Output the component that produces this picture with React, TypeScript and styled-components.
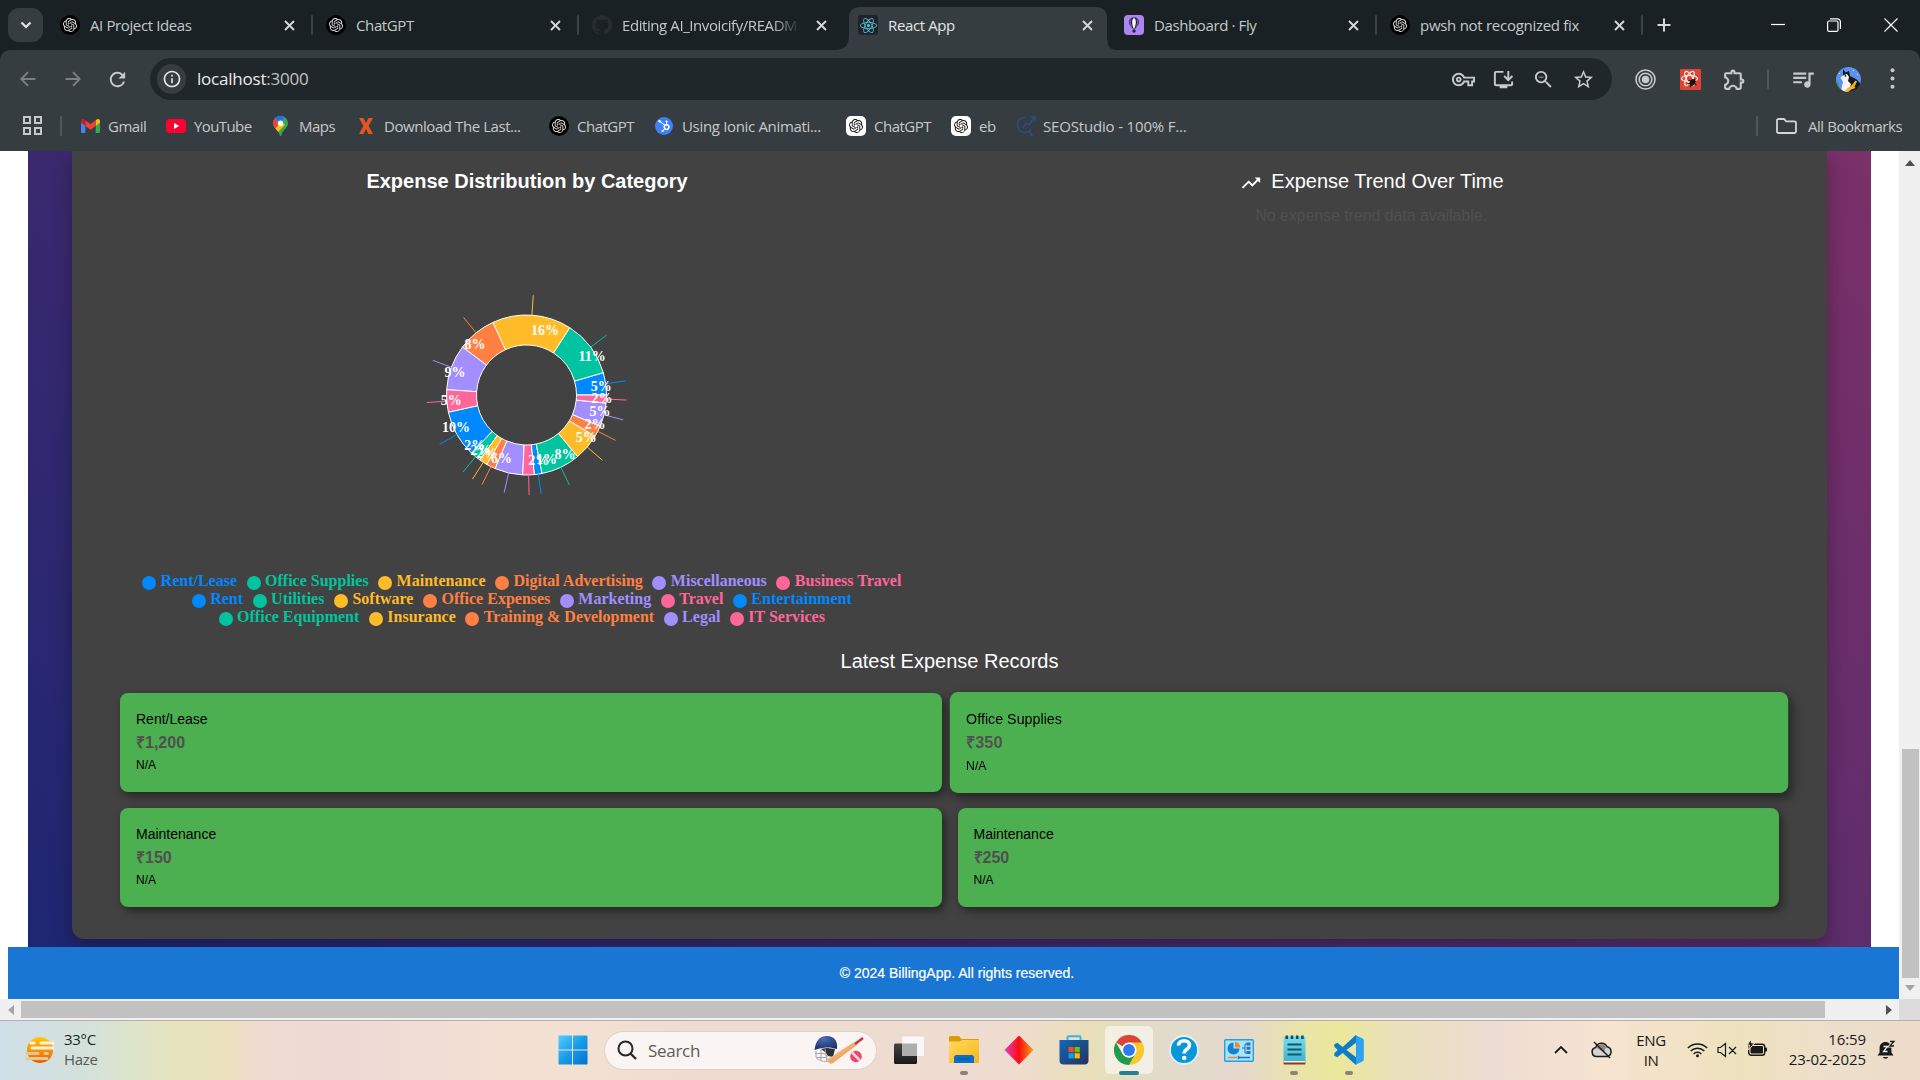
import React from 'react';
import styled, { createGlobalStyle } from 'styled-components';
import { SiOpenai, SiGithub, SiHubspot, SiReact } from 'react-icons/si';
import {
  MdOutlineVpnKey, MdOutlineInstallDesktop, MdOutlineZoomOut, MdStarBorder, MdOutlineExtension,
  MdQueueMusic, MdTrendingUp, MdRefresh, MdOutlineInfo,
} from 'react-icons/md';

const Global = createGlobalStyle`
  *, *::before, *::after { box-sizing: border-box; }
  body { margin: 0; overflow: hidden; background: #fff; }
`;

const ui = `"Open Sans", "Noto Sans", sans-serif`;
const arial = `"Liberation Sans", Arial, sans-serif`;

const Screen = styled.div`
  width: 1920px; height: 1080px; overflow: hidden;
  display: flex; flex-direction: column;
  font-family: ${ui};
`;

/* ---------- Browser chrome ---------- */
const TabStrip = styled.div`
  height: 50px; flex: none; background: #1a2124; display: flex; align-items: stretch; padding-left: 8px;
`;
const TabSearch = styled.div`
  width: 35px; height: 34px; margin-top: 8px; border-radius: 11px; background: #363d40;
  display: flex; align-items: center; justify-content: center; margin-right: 3px;
`;
const Tab = styled.div<{ $active?: boolean }>`
  width: 266px; height: 50px; display: flex; align-items: center; padding: 0 13px 0 14px; position: relative;
  color: ${p => (p.$active ? '#e3e6e6' : '#c3c9ca')};
`;
const ActiveShape = styled.svg`
  position: absolute; left: -9px; top: 0; width: 282px; height: 50px;
`;
const TabIcon = styled.span`
  width: 20px; height: 20px; flex: none; display: flex; position: relative;
`;
const TabTitle = styled.span<{ $fade?: boolean; $ls?: number }>`
  margin-left: 10px; width: 180px; overflow: hidden; white-space: nowrap; font-size: 15px; line-height: 22px;
  letter-spacing: ${p => p.$ls ?? -0.38}px; position: relative;
  ${p => p.$fade && 'mask-image: linear-gradient(90deg, #000 84%, transparent 99%);'}
`;
const TabClose = styled.svg`
  width: 11px; height: 11px; margin-left: 14px; position: relative; flex: none;
`;
const Divider = styled.span<{ $h?: number; $c?: string }>`
  width: 2px; height: ${p => p.$h ?? 20}px; border-radius: 1px; background: ${p => p.$c ?? '#3b4346'}; flex: none;
`;
const TabDivider = styled(Divider)`margin-left: auto; margin-right: -14px;`;
const NewTab = styled.svg`width: 14px; height: 14px; margin: 18px 0 0 15px;`;
const WindowButtons = styled.div`
  margin-left: auto; display: flex; height: 49px; align-items: center; margin-right: 1px;
`;
const WindowButton = styled.span`
  width: 56.5px; display: flex; justify-content: center;
`;

const ToolbarWrap = styled.div`background: #1a2124; flex: none;`;
const Toolbar = styled.div`
  height: 58px; background: #363d40; border-radius: 10px 10px 0 0; display: flex; align-items: center; color: #c5cacb;
  padding-left: 5px;
`;
const NavButton = styled.span<{ $dim?: boolean }>`
  width: 45px; flex: none; display: flex; justify-content: center; color: ${p => (p.$dim ? '#7b8183' : '#c5cacb')};
`;
const Omnibox = styled.div`
  margin-left: 10px; width: 1462px; flex: none; height: 42px; border-radius: 21px; background: #20272a;
  display: flex; align-items: center; padding: 0 9px 0 7px;
`;
const InfoBadge = styled.span`
  width: 29px; height: 30px; border-radius: 15px; background: #363d40; color: #e3e6e6;
  display: flex; align-items: center; justify-content: center;
`;
const Url = styled.span`
  margin-left: 11px; font-size: 17px; letter-spacing: -0.22px; color: #e9ebeb; flex: 1; line-height: 24px;
  span { color: #bfc4c5; }
`;
const OmniAction = styled.span`width: 40px; display: flex; justify-content: center; flex: none; color: #c5cacb;`;
const ToolSlot = styled.span<{ $w: number; $pl?: number }>`
  width: ${p => p.$w}px; padding-left: ${p => p.$pl ?? 0}px; display: flex; justify-content: center; flex: none;
`;

const BookmarkBar = styled.div`
  height: 43px; flex: none; background: #363d40; display: flex; align-items: center; color: #c5c9ca;
  padding: 0 0 8px 23px;
`;
const Bookmark = styled.div<{ $w: number; $gap: number; $ls?: number }>`
  width: ${p => p.$w}px; display: flex; align-items: center; gap: ${p => p.$gap}px; white-space: nowrap; flex: none;
  font-size: 15px; line-height: 20px; letter-spacing: ${p => p.$ls ?? -0.5}px;
  svg, i { flex: none; }
`;
const Disc = styled.i<{ $bg: string; $fg: string; $r?: string; $s?: number }>`
  width: ${p => p.$s ?? 20}px; height: ${p => p.$s ?? 20}px; border-radius: ${p => p.$r ?? '50%'}; background: ${p => p.$bg};
  color: ${p => p.$fg}; display: inline-flex; align-items: center; justify-content: center; flex: none;
`;
const GridDivider = styled(Divider)`margin: 0 19px 0 18px;`;
const AllBookmarks = styled(Bookmark)`margin-left: auto; ${Divider} { margin-right: 7px; }`;

/* ---------- Page ---------- */
const Viewport = styled.div`
  height: 869px; flex: none; display: grid; grid-template: 848px 21px / 1899px 21px; background: #fff;
`;
const Page = styled.div`display: flex; flex-direction: column; overflow: hidden; font-family: ${arial};`;
const Backdrop = styled.div`
  margin: 0 28px; height: 796px; flex: none; padding: 0 44px 8px; overflow: hidden;
  background: linear-gradient(45deg, #1e2672, #7b3069);
`;
const Panel = styled.div`
  height: 788px; background: #424242; border-radius: 0 0 12px 12px; box-shadow: 0 8px 20px rgba(0,0,0,.3);
  display: flex; flex-direction: column; padding: 0 48px;
`;
const Charts = styled.div`display: grid; grid-template-columns: 814px 814px; column-gap: 34px; height: 494px; flex: none;`;
const ChartColumn = styled.div`display: flex; flex-direction: column; align-items: center; padding-top: 14px;`;
const Heading = styled.h6<{ $bold?: boolean }>`
  margin: 0; color: #fff; font-size: 20px; line-height: 32px; font-weight: ${p => (p.$bold ? 700 : 400)};
  display: flex; align-items: center; gap: 9px;
`;
const TrendHeading = styled(Heading)`margin-left: -6px; svg { margin-top: 3px; }`;
const EmptyNote = styled.p`margin: 7px 0 0 -8px; font-size: 16px; line-height: 24px; letter-spacing: -0.07px; color: #505050;`;
const Pie = styled.svg`width: 814px; height: 360px; flex: none; font: bold 14px "Liberation Serif", "Times New Roman", serif;`;
const Legend = styled.ul`
  margin: 15px 0 0; padding: 0; list-style: none; width: 812px; display: flex; flex-wrap: wrap; justify-content: center;
  font: bold 16px/18px "Liberation Serif", "Times New Roman", serif;
`;
const LegendItem = styled.li<{ $c: string }>`
  display: flex; color: ${p => p.$c}; margin-right: 10px; height: 18px;
  &::before { content: ''; width: 14px; height: 14px; margin: 4px 4.500px 0 -0.500px; border-radius: 50%; background: ${p => p.$c}; }
`;
const RecordsTitle = styled(Heading)`justify-content: center; height: 32px;`;
const Records = styled.div`display: grid; grid-template-columns: 821.5px 821.5px; gap: 16px; margin-top: 16px;`;
const Record = styled.div<{ $hover?: boolean }>`
  height: 99px; border-radius: 8px; background: #4caf50; padding: 16px; box-shadow: 3px 4px 10px rgba(0,0,0,.45);
  ${p => p.$hover && 'transform: scale(1.02);'}
`;
const RecordName = styled.div`font-size: 14px; line-height: 20px; color: #000;`;
const RecordAmount = styled.div`font-size: 16px; line-height: 25.6px; padding-top: 1px; margin-bottom: -1px; font-weight: 700; color: #505050;`;
const RecordNote = styled.div`font-size: 12px; line-height: 20px; color: #000;`;
const Footer = styled.footer`
  margin: 0 0 0 8px; height: 52px; flex: none; background: #1976d2; color: #fff; font-size: 14px; line-height: 52px;
  text-align: center;
`;
const FooterText = styled.span`padding-left: 7px; -webkit-text-stroke: .2px #fff;`;

const VScroll = styled.div`background: #f0f0f0; display: flex; flex-direction: column; align-items: center; padding: 9px 0 8px 1px; justify-content: space-between;`;
const VThumb = styled.div`width: 17px; height: 229px; background: #c1c1c1; margin: auto 0 7px;`;
const HScroll = styled.div`background: #f0f0f0; display: flex; align-items: center; padding: 0 7px 0 8px; justify-content: space-between;`;
const HThumb = styled.div`height: 17px; width: 1804px; background: #c1c1c1; margin: 0 auto 0 7px;`;
const Corner = styled.div`background: #dcdcdc;`;
const Arrow = styled.svg`flex: none;`;

/* ---------- Taskbar ---------- */
const Taskbar = styled.div`
  height: 60px; flex: none; border-top: 1px solid #b9aeaa; display: flex; align-items: center; padding-bottom: 1px;
  background: linear-gradient(90deg, #cfdfe8 0, #d3e1dc 80px, #e4e5c0 165px, #ebe1bd 225px, #eedbd2 262px, #eedad5 350px,
    #f3e2d3 540px, #efdcd1 700px, #efdcd0 1010px, #e9dfb9 1090px, #dfdcc9 1150px, #e5d8cd 1240px, #e8e5a8 1300px, #ebe79c 1340px, #eae0bd 1400px,
    #eddcd2 1490px, #f6e4d1 1600px, #eee2bd 1735px, #eddfcb 1830px, #ecdcc9 1920px);
`;
const Weather = styled.div`width: 545px; display: flex; align-items: center; padding-left: 25px; gap: 9px;`;
const WeatherText = styled.div`
  font-size: 15px; line-height: 24px; letter-spacing: -0.3px; color: #1d1f20; margin-top: -5px;
  div + div { color: #55595a; line-height: 17px; }
`;
const TaskCell = styled.div`width: 55px; height: 58px; display: flex; align-items: center; justify-content: center; position: relative; flex: none;`;
const ActiveTile = styled.div`
  width: 48px; height: 48px; border-radius: 5px; background: rgba(255,255,255,.55); display: flex; align-items: center; justify-content: center;
`;
const Running = styled.span<{ $active?: boolean }>`
  position: absolute; bottom: 4px; left: 50%; transform: translateX(-50%);
  width: ${p => (p.$active ? 20 : 8)}px; height: 4px; border-radius: 2px; background: ${p => (p.$active ? '#25808f' : '#8b827b')};
`;
const SearchBox = styled.div`
  margin: 0 4.5px 0 4px; width: 273px; height: 39px; border-radius: 20px; background: #faf5f2; border: 1px solid #dfd0c8;
  display: flex; align-items: center; padding: 0 12px 0 12px; font-size: 17px; color: #5a5b5b; letter-spacing: -0.3px; flex: none;
  span { margin-left: 11px; flex: 1; }
`;
const Tray = styled.div`margin-left: auto; display: flex; align-items: center; padding-right: 25px; color: #1a1a1a; height: 58px;`;
const Lang = styled.div`width: 30px; margin: 0 21px 0 23px; text-align: center; font-size: 15px; line-height: 20px; letter-spacing: -0.4px;`;
const Clock = styled.div`margin: -2px 11px 0 20px; text-align: right; font-size: 15px; line-height: 20px; letter-spacing: -0.1px; width: 78px; white-space: nowrap;`;
const CloudOff = styled.svg`margin-left: 23px;`;
const Speaker = styled.svg`margin-left: 9px;`;
const Battery = styled.svg`margin: -4px 0 0 10px;`;
const Bell = styled.svg`margin-right: -1px;`;

const GptIcon = ({ light }: { light?: boolean }) => (
  <Disc $bg={light ? '#fff' : '#000'} $fg={light ? '#111' : '#e4e4e4'} $r={light ? '5px' : '50%'}><SiOpenai size={14} /></Disc>
);
const Close = () => (
  <TabClose viewBox="0 0 11 11"><path d="M1 1l9 9M10 1l-9 9" stroke="#d4d8d9" strokeWidth="1.9" /></TabClose>
);
const FlyIcon = () => (
  <svg width="20" height="20" viewBox="0 0 20 20">
    <rect width="20" height="20" rx="4" fill="#ab85f0" />
    <path d="M10 2.5c-3.1 0-5 2.1-5 4.8 0 2.3 2 4.3 3.6 6.1h2.8C13 11.600 15 9.600 15 7.300c0-2.700-1.900-4.800-5-4.800z" fill="#27204b" />
    <path d="M10 3.300c-1.300 0-1.800 2-1.800 4 0 2 .7 4.200 1.200 5.600h1.200c.5-1.400 1.200-3.600 1.200-5.600 0-2-.5-4-1.800-4z" fill="#fff" />
    <path d="M7.200 4.300c-1.600 2-1.200 4.600.8 7.400M12.800 4.300c1.600 2 1.200 4.600-.8 7.400" stroke="#b7a6e8" strokeWidth=".6" fill="none" />
    <circle cx="10" cy="16" r="1.700" fill="#27204b" />
  </svg>
);
const ReactTab = () => (
  <Disc $bg="#20242a" $fg="#58c4dc" $r="3px"><SiReact size={17} /></Disc>
);

const Tabs = () => (
  <TabStrip>
    <TabSearch>
      <svg width="12" height="8" viewBox="0 0 12 8"><path d="M1.500 1.500L6 6l4.500-4.500" fill="none" stroke="#e2e5e6" strokeWidth="2.200" /></svg>
    </TabSearch>
    <Tab><TabIcon><GptIcon /></TabIcon><TabTitle>AI Project Ideas</TabTitle><Close /><TabDivider /></Tab>
    <Tab><TabIcon><GptIcon /></TabIcon><TabTitle>ChatGPT</TabTitle><Close /><TabDivider /></Tab>
    <Tab><TabIcon><SiGithub size={20} color="#272c31" /></TabIcon><TabTitle $fade $ls={-0.42}>Editing AI_Invoicify/README</TabTitle><Close /></Tab>
    <Tab $active>
      <ActiveShape viewBox="0 0 282 50"><path d="M0 50c9 0 14-5 14-14V18c0-7 4-11 11-11h236c7 0 11 4 11 11v18c0 9 2 14 10 14z" fill="#363d40" /></ActiveShape>
      <TabIcon><ReactTab /></TabIcon><TabTitle>React App</TabTitle><Close />
    </Tab>
    <Tab><TabIcon><FlyIcon /></TabIcon><TabTitle>Dashboard · Fly</TabTitle><Close /><TabDivider /></Tab>
    <Tab><TabIcon><GptIcon /></TabIcon><TabTitle $ls={-0.28}>pwsh not recognized fix</TabTitle><Close /><TabDivider /></Tab>
    <NewTab viewBox="0 0 14 14"><path d="M7 .5v13M.5 7h13" stroke="#d4d8d9" strokeWidth="2" /></NewTab>
    <WindowButtons>
      <WindowButton><svg width="14" height="14"><path d="M0 6.500h14" stroke="#fff" strokeWidth="1.200" /></svg></WindowButton>
      <WindowButton>
        <svg width="14" height="14" fill="none" stroke="#fff" strokeWidth="1.200">
          <rect x=".6" y="3" width="10.400" height="10.400" rx="1.500" /><path d="M3 .8h7.400a3 3 0 0 1 3 3V11" />
        </svg>
      </WindowButton>
      <WindowButton><svg width="14" height="14"><path d="M.5.5l13 13M13.500.5l-13 13" stroke="#fff" strokeWidth="1.200" /></svg></WindowButton>
    </WindowButtons>
  </TabStrip>
);

const Avatar = () => (
  <svg width="25" height="25" viewBox="0 0 25 25">
    <defs><clipPath id="av"><circle cx="12.500" cy="12.500" r="12.500" /></clipPath></defs>
    <g clipPath="url(#av)">
      <rect width="25" height="25" fill="#5b92ee" />
      <path d="M0 14l2 1 3 10H0z" fill="#2f9a62" />
      <path d="M7 2l2.500 3.500L13 4l1 5 6 3 4 4v9H9l1-9-3-6z" fill="#17191f" />
      <path d="M4.500 10.500L8 8l3-1 2 3-1 4 3 3-1 4-3 4H5l1-6 1-4z" fill="#f4f4f4" />
      <circle cx="9.500" cy="8.800" r=".9" fill="#17191f" />
      <path d="M9 25l1.500-3 5-3.500 4-5 1.500 1-2.500 5 1 1.500-4 1.500-4 3z" fill="#f2b02a" />
      <path d="M17 3.500h1M21 7.500h1M3 6.500h1" stroke="#d7e6ff" />
    </g>
  </svg>
);

const ToolbarRow = () => (
  <ToolbarWrap>
    <Toolbar>
      <NavButton $dim><svg width="16" height="16" viewBox="0 0 16 16" fill="none" stroke="currentColor" strokeWidth="1.900"><path d="M15.500 8H1.500M8 1.200L1.300 8 8 14.800" /></svg></NavButton>
      <NavButton $dim><svg width="16" height="16" viewBox="0 0 16 16" fill="none" stroke="currentColor" strokeWidth="1.900"><path d="M.5 8h14M8 1.200L14.700 8 8 14.800" /></svg></NavButton>
      <NavButton><MdRefresh size={23} /></NavButton>
      <Omnibox>
        <InfoBadge><MdOutlineInfo size={20} /></InfoBadge>
        <Url>localhost<span>:3000</span></Url>
        <OmniAction><MdOutlineVpnKey size={23} /></OmniAction>
        <OmniAction><MdOutlineInstallDesktop size={23} /></OmniAction>
        <OmniAction><MdOutlineZoomOut size={23} /></OmniAction>
        <OmniAction><MdStarBorder size={23} /></OmniAction>
      </Omnibox>
      <ToolSlot $w={67}>
        <svg width="21" height="21" viewBox="0 0 21 21" fill="none" stroke="#c5cacb" strokeWidth="1.600">
          <circle cx="10.500" cy="10.500" r="9.500" /><circle cx="10.500" cy="10.500" r="6.300" /><circle cx="10.500" cy="10.500" r="3" fill="#c5cacb" />
        </svg>
      </ToolSlot>
      <ToolSlot $w={23}>
        <Disc $bg="#dc4434" $fg="#fbeae6" $r="1px" $s={21}>
          <svg width="21" height="21" viewBox="0 0 21 21" fill="none" stroke="#f8e4df" strokeWidth="1.300">
            <ellipse cx="9.500" cy="9.500" rx="8" ry="3.200" /><ellipse cx="9.500" cy="9.500" rx="8" ry="3.200" transform="rotate(60 9.500 9.500)" /><ellipse cx="9.500" cy="9.500" rx="8" ry="3.200" transform="rotate(120 9.500 9.500)" />
            <ellipse cx="12.500" cy="13.500" rx="2.600" ry="3.600" fill="#1d1311" stroke="none" transform="rotate(25 12.500 13.500)" />
            <path d="M8.500 11l8 5M8 15l8-3M10 18l5-8" stroke="#1d1311" />
          </svg>
        </Disc>
      </ToolSlot>
      <ToolSlot $w={65}><MdOutlineExtension size={25} /></ToolSlot>
      <Divider $c="#50585b" />
      <ToolSlot $w={67}><MdQueueMusic size={26} /></ToolSlot>
      <ToolSlot $w={25}><Avatar /></ToolSlot>
      <ToolSlot $w={59} $pl={4}>
        <svg width="5" height="22" viewBox="0 0 5 22" fill="currentColor"><circle cx="2.500" cy="2.200" r="2" /><circle cx="2.500" cy="10.500" r="2" /><circle cx="2.500" cy="18.800" r="2" /></svg>
      </ToolSlot>
    </Toolbar>
  </ToolbarWrap>
);

const Bookmarks = () => (
  <BookmarkBar>
    <svg width="19" height="19" viewBox="0 0 19 19" fill="none" stroke="#c5c9ca" strokeWidth="2">
      <rect x="1" y="1" width="6" height="6" /><rect x="12" y="1" width="6" height="6" /><rect x="1" y="12" width="6" height="6" /><rect x="12" y="12" width="6" height="6" />
    </svg>
    <GridDivider $c="#50585b" />
    <Bookmark $w={85} $gap={8}>
      <svg width="19" height="14" viewBox="0 0 19 14">
        <path d="M0 2v10.700C0 13.500.600 14 1.300 14H4.300V5z" fill="#4285f4" /><path d="M19 2v10.700c0 .8-.6 1.300-1.300 1.300H14.700V5z" fill="#34a853" />
        <path d="M14.700 1.200V7L19 3.800V2c0-1.800-1.900-2.600-3.200-1.600z" fill="#fbbc04" /><path d="M4.300 7V1.200L9.500 5l5.200-3.800V7L9.500 10.800z" fill="#ea4335" />
        <path d="M0 2v1.800L4.300 7V1.200l-1-.8C1.900-.6 0 .2 0 2z" fill="#c5221f" />
      </svg>Gmail
    </Bookmark>
    <Bookmark $w={107} $gap={8} $ls={-0.6}>
      <svg width="20" height="14" viewBox="0 0 20 14"><rect width="20" height="14" rx="3.500" fill="#ff0033" /><path d="M8 4l5.200 3L8 10z" fill="#fff" /></svg>YouTube
    </Bookmark>
    <Bookmark $w={86} $gap={11}>
      <svg width="15" height="20" viewBox="0 0 15 20">
        <defs><clipPath id="pin"><path d="M7.500 0C3.300 0 0 3.200 0 7.300c0 5 6 7.200 6.600 12 .1.900 1.700.9 1.800 0C9 14.500 15 12.300 15 7.300 15 3.200 11.700 0 7.500 0z" /></clipPath></defs>
        <g clipPath="url(#pin)"><rect width="15" height="20" fill="#34a853" /><path d="M0 14L15-1V-2H0z" fill="#4285f4" /><path d="M0 0l7 7-7 8z" fill="#ea4335" /><path d="M0 14.500L9 6l3 3-9 9z" fill="#fbbc04" /><path d="M2 0h11l-6 6-5-4z" fill="#1a73e8" /></g>
        <circle cx="7.500" cy="7.300" r="2.700" fill="#fff" />
      </svg>Maps
    </Bookmark>
    <Bookmark $w={190} $gap={11} $ls={-0.43}>
      <svg width="14" height="16" viewBox="0 0 14 16"><path d="M0 0h4.500L7 5l2.500-5H14L9.500 8l4.500 8H9.500L7 11l-2.500 5H0l4.500-8z" fill="#e8541f" /></svg>Download The Last...
    </Bookmark>
    <Bookmark $w={106} $gap={8}><GptIcon />ChatGPT</Bookmark>
    <Bookmark $w={191} $gap={9} $ls={-0.33}><Disc $bg="#3d80f7" $fg="#fff" $s={18}><SiHubspot size={12} /></Disc>Using Ionic Animati...</Bookmark>
    <Bookmark $w={105} $gap={8}><GptIcon light />ChatGPT</Bookmark>
    <Bookmark $w={65} $gap={8}><GptIcon light />eb</Bookmark>
    <Bookmark $w={180} $gap={7} $ls={-0.17}>
      <svg width="20" height="22" viewBox="0 0 20 22" fill="none" stroke="#2c4a86" strokeWidth="1.500"><path d="M10 2.500a7.500 7.500 0 1 0 5 12M13 16l4 5.500M7 13l3-5 3 2 5-7.500M14.500 2L19 1.500V6" /></svg>SEOStudio - 100% F...
    </Bookmark>
    <AllBookmarks $w={164} $gap={11} $ls={-0.45}>
      <Divider $c="#50585b" />
      <svg width="21" height="16" viewBox="0 0 21 16" fill="none" stroke="#d3d6d7" strokeWidth="1.800"><path d="M1 2.500C1 1.600 1.600 1 2.500 1H8l2.200 2.300h8.300c.9 0 1.500.6 1.500 1.500v8.700c0 .9-.6 1.500-1.500 1.500h-16C1.600 15 1 14.400 1 13.500z" /></svg>
      All Bookmarks
    </AllBookmarks>
  </BookmarkBar>
);

/* ---------- Donut chart ---------- */
const palette = ['#0088fe', '#00c49f', '#ffbb28', '#ff8042', '#a28eff', '#ff6699'];
const categories: { name: string; end: number; label: string }[] = [
  { name: 'Rent/Lease', end: 16.200, label: '5%' },
  { name: 'Office Supplies', end: 57.300, label: '11%' },
  { name: 'Maintenance', end: 114.900, label: '16%' },
  { name: 'Digital Advertising', end: 143.200, label: '8%' },
  { name: 'Miscellaneous', end: 176.200, label: '9%' },
  { name: 'Business Travel', end: 192.500, label: '5%' },
  { name: 'Rent', end: 226.700, label: '10%' },
  { name: 'Utilities', end: 234.300, label: '2%' },
  { name: 'Software', end: 240.300, label: '2%' },
  { name: 'Office Expenses', end: 246.900, label: '2%' },
  { name: 'Marketing', end: 267.300, label: '6%' },
  { name: 'Travel', end: 275.700, label: '2%' },
  { name: 'Entertainment', end: 281.200, label: '1%' },
  { name: 'Office Equipment', end: 309.700, label: '8%' },
  { name: 'Insurance', end: 329, label: '5%' },
  { name: 'Training & Development', end: 337, label: '2%' },
  { name: 'Legal', end: 354.200, label: '5%' },
  { name: 'IT Services', end: 360, label: '2%' },
];
const CX = 406.500, CY = 198;
const at = (deg: number, r: number): [number, number] => {
  const a = (deg * Math.PI) / 180;
  return [CX + r * Math.cos(a), CY - r * Math.sin(a)];
};
const Donut = () => {
  const slices = categories.map((c, i) => ({ ...c, start: i ? categories[i - 1].end : 0, color: palette[i % 6] }));
  return (
    <Pie viewBox="0 0 814 360">
      {slices.map(s => {
        const large = s.end - s.start > 180 ? 1 : 0;
        return (
          <path key={s.name} stroke="#fff" fill={s.color}
            d={`M${at(s.start, 80)}A80 80 0 ${large} 0 ${at(s.end, 80)}L${at(s.end, 50)}A50 50 0 ${large} 1 ${at(s.start, 50)}Z`} />
        );
      })}
      {slices.map(s => {
        const mid = (s.start + s.end) / 2;
        const [x, y] = at(mid, 65);
        return (
          <g key={s.name}>
            <path d={`M${at(mid, 80)}L${at(mid, 100)}`} stroke={s.color} />
            <text x={x} y={y + 0.4} fill="#fff" textAnchor={x > CX ? 'start' : 'end'} dominantBaseline="central">{s.label}</text>
          </g>
        );
      })}
    </Pie>
  );
};

const records = [
  { name: 'Rent/Lease', amount: '₹1,200' },
  { name: 'Office Supplies', amount: '₹350', hover: true },
  { name: 'Maintenance', amount: '₹150' },
  { name: 'Maintenance', amount: '₹250' },
];

const PageArea = () => (
  <Viewport>
    <Page>
      <Backdrop>
        <Panel>
          <Charts>
            <ChartColumn>
              <Heading $bold>Expense Distribution by Category</Heading>
              <Donut />
              <Legend>
                {categories.map((c, i) => <LegendItem key={c.name} $c={palette[i % 6]}>{c.name}</LegendItem>)}
              </Legend>
            </ChartColumn>
            <ChartColumn>
              <TrendHeading><MdTrendingUp size={22} />Expense Trend Over Time</TrendHeading>
              <EmptyNote>No expense trend data available.</EmptyNote>
            </ChartColumn>
          </Charts>
          <RecordsTitle>Latest Expense Records</RecordsTitle>
          <Records>
            {records.map((r, i) => (
              <Record key={i} $hover={r.hover}>
                <RecordName>{r.name}</RecordName>
                <RecordAmount>{r.amount}</RecordAmount>
                <RecordNote>N/A</RecordNote>
              </Record>
            ))}
          </Records>
        </Panel>
      </Backdrop>
      <Footer><FooterText>© 2024 BillingApp. All rights reserved.</FooterText></Footer>
    </Page>
    <VScroll>
      <Arrow width="10" height="6"><path d="M0 6L5 0l5 6z" fill="#505050" /></Arrow>
      <VThumb />
      <Arrow width="10" height="6"><path d="M0 0h10L5 6z" fill="#a3a3a3" /></Arrow>
    </VScroll>
    <HScroll>
      <Arrow width="6" height="10"><path d="M6 0v10L0 5z" fill="#a3a3a3" /></Arrow>
      <HThumb />
      <Arrow width="6" height="10"><path d="M0 0v10l6-5z" fill="#505050" /></Arrow>
    </HScroll>
    <Corner />
  </Viewport>
);

/* ---------- Taskbar icons ---------- */
const WinLogo = () => (
  <svg width="30" height="30" viewBox="0 0 30 30">
    <defs><linearGradient id="wl" x1="0" y1="0" x2="1" y2="1"><stop offset="0" stopColor="#4fd0ff" /><stop offset=".5" stopColor="#1a9be8" /><stop offset="1" stopColor="#0070d2" /></linearGradient></defs>
    <path d="M.5 1.500a1 1 0 0 1 1-1H14v14H.5zM15 .5h13.500a1 1 0 0 1 1 1v13H15zM.5 15.500H14v14H1.500a1 1 0 0 1-1-1zM15 15.500h14.500v13a1 1 0 0 1-1 1H15z" fill="url(#wl)" />
  </svg>
);
const Cricket = () => (
  <svg width="50" height="30" viewBox="0 0 50 30">
    <defs>
      <linearGradient id="bat" x1="0" y1="0" x2="1" y2="1"><stop offset="0" stopColor="#fbd096" /><stop offset="1" stopColor="#e2893f" /></linearGradient>
      <radialGradient id="hel" cx=".4" cy=".2" r=".9"><stop offset="0" stopColor="#4d6bb5" /><stop offset="1" stopColor="#16285f" /></radialGradient>
    </defs>
    <path d="M7 14l6-1 8 1-2 8-5-1-3-4z" fill="#2b2f3c" />
    <path d="M2 16v6c2 4 8 5 14 4l4-4M1 18.500h9l4 3M2 22.500h10l3 3M7 15v10M11 14l2 12" stroke="#a5a7a9" fill="none" />
    <path d="M.5 15C2 5 6 1 13 1s11 5 10 13l-7-1.500c-5 0-10 .5-15.500 2.500z" fill="url(#hel)" />
    <path d="M37 9l4-2 2 3-24 18c-2 2-7-1-5-4z" fill="url(#bat)" />
    <path d="M41 9l8-6" stroke="#d2313c" strokeWidth="2.600" />
    <circle cx="42" cy="21.500" r="5.800" fill="#f04468" /><path d="M38 17.500l8 8" stroke="#fbd3dd" strokeWidth="2.500" />
  </svg>
);
const TaskView = () => (
  <svg width="30" height="28" viewBox="0 0 30 28">
    <defs><linearGradient id="tv" x1="0" y1="0" x2="0" y2="1"><stop offset="0" stopColor="#454545" /><stop offset="1" stopColor="#191919" /></linearGradient></defs>
    <rect x="0" y="7.500" width="23" height="20.500" rx="1.500" fill="url(#tv)" />
    <rect x="8" y=".5" width="22" height="19.500" rx="1" fill="#f8f8f8" /><rect x="8" y="7.500" width="15" height="12.500" fill="#aeaeae" />
  </svg>
);
const Folder = () => (
  <svg width="30" height="28" viewBox="0 0 30 28">
    <defs><linearGradient id="fo" x1="0" y1="0" x2="1" y2="1"><stop offset="0" stopColor="#ffda5e" /><stop offset="1" stopColor="#fbb51a" /></linearGradient></defs>
    <path d="M0 1.500C0 .7.7 0 1.500 0h8.700l2 3H29c.6 0 1 .4 1 1v6H0z" fill="#dd9b0a" />
    <path d="M0 5.500h11l2-1.500h17v22c0 .6-.4 1-1 1H1c-.6 0-1-.4-1-1z" fill="url(#fo)" />
    <path d="M5 27v-5.500C5 20 6 19 7.500 19h15c1.500 0 2.500 1 2.500 2.500V27z" fill="#0a6fc9" /><path d="M9 23h12" stroke="#084e94" />
  </svg>
);
const Diamond = () => (
  <svg width="30" height="30" viewBox="0 0 30 30">
    <defs><linearGradient id="di"><stop offset="0" stopColor="#e23dc0" /><stop offset=".5" stopColor="#fb0d0f" /><stop offset="1" stopColor="#f7a11a" /></linearGradient></defs>
    <path d="M15 .5L29.500 15 15 29.500.5 15z" fill="url(#di)" />
  </svg>
);
const Store = () => (
  <svg width="30" height="30" viewBox="0 0 30 30">
    <defs><linearGradient id="st" x1="0" y1="0" x2="1" y2="1"><stop offset="0" stopColor="#1269b8" /><stop offset="1" stopColor="#26315c" /></linearGradient></defs>
    <path d="M8.500 6V2.500c0-.8.500-1.300 1.300-1.300h10.400c.8 0 1.300.5 1.300 1.300V6" fill="none" stroke="#2db7ee" strokeWidth="2" />
    <path d="M.5 5h29v20.500c0 2.500-1.500 4-4 4h-21c-2.500 0-4-1.500-4-4z" fill="url(#st)" />
    <path d="M9.500 12h5.200v5.200H9.500z" fill="#f25022" /><path d="M15.600 12h5.200v5.200h-5.200z" fill="#7fba00" /><path d="M9.500 18.200h5.200v5.200H9.500z" fill="#00a4ef" /><path d="M15.600 18.200h5.200v5.200h-5.200z" fill="#ffb900" />
  </svg>
);
const ChromeLogo = () => (
  <svg width="30" height="30" viewBox="0 0 48 48">
    <path d="M24 24L3.200 12A24 24 0 0 1 44.800 12z" fill="#db4437" /><path d="M24 12h20.800A24 24 0 0 1 24 48l10.400-18z" fill="#fdc62f" />
    <path d="M3.200 12l10.400 18A12 12 0 0 0 34.400 30L24 48A24 24 0 0 1 3.200 12z" fill="#229a4b" />
    <circle cx="24" cy="24" r="12" fill="#fff" /><circle cx="24" cy="24" r="9.500" fill="#2f7af0" />
  </svg>
);
const Help = () => (
  <svg width="30" height="30" viewBox="0 0 30 30">
    <circle cx="15" cy="15" r="14" fill="#0a97d9" stroke="#e3f1f6" strokeWidth="1.800" />
    <path d="M9.500 10.500c.2-3 2.500-4.800 5.600-4.800 3 0 5.400 1.600 5.400 4.500 0 4-5.300 3.800-5.300 8.300" fill="none" stroke="#fff" strokeWidth="3.600" /><circle cx="15.200" cy="23" r="2.300" fill="#fff" />
  </svg>
);
const Control = () => (
  <svg width="30" height="23" viewBox="0 0 30 23">
    <rect x=".7" y=".7" width="28.600" height="21.600" rx="1" fill="#a8e4fb" stroke="#2a9fdc" strokeWidth="1.400" />
    <path d="M9.500 3.500a6 6 0 1 0 6 6h-6z" fill="#1583cf" /><path d="M11 2.800V8.500h5.200a5.500 5.500 0 0 0-5.200-5.700z" fill="#f58b1c" />
    <path d="M18 9h3V5h3M21 9v5h3" stroke="#1b72bf" fill="none" /><path d="M22.500 3.500h4v3h-4zM22.500 7.800h4v3h-4zM22.500 12h4v3h-4z" fill="#2b74b8" />
    <path d="M4 18.500h9" stroke="#f58b1c" strokeWidth="1.500" /><path d="M15 18.500h11M14.500 16.800v3.400" stroke="#1b72bf" strokeWidth="1.300" />
  </svg>
);
const Notepad = () => (
  <svg width="23" height="30" viewBox="0 0 23 30">
    <defs><linearGradient id="np" x1="0" y1="0" x2="0" y2="1"><stop offset="0" stopColor="#7fdbe8" /><stop offset="1" stopColor="#3fb6cf" /></linearGradient></defs>
    <rect x=".5" y="25" width="22" height="4.500" rx="1" fill="#8a3c12" /><rect x=".5" y="24" width="22" height="3.500" fill="#f3efe9" />
    <path d="M.5 3c0-1 .5-1.500 1.500-1.500h19c1 0 1.500.5 1.500 1.500v23H.5z" fill="url(#np)" />
    <path d="M4.500 9.500h14M4.500 14.500h14M4.500 19.500h14" stroke="#0a5a72" strokeWidth="1.800" />
    <path d="M3.800.5v3.500M9 .5v3.500M14.200.5v3.500M19.400.5v3.500" stroke="#0a4f66" strokeWidth="2.600" />
  </svg>
);
const Code = () => (
  <svg width="30" height="30" viewBox="0 0 30 30">
    <path d="M21.500.2L8.800 11.900 3.300 7.700.3 9.200v2.600L3.700 15 .3 18.200v2.600l3 1.500 5.500-4.200 12.700 11.700 2-1V1.200zM12.500 15L22 7.700v14.600z" fill="#0f7cc8" fillRule="evenodd" />
    <path d="M21.500.2l7 3.400c.8.400 1.300 1 1.300 1.900v19c0 .9-.5 1.500-1.300 1.900l-7 3.400c.6-.5.600-1 .6-1.700V2c0-.7 0-1.300-.6-1.800z" fill="#2ba4f2" />
  </svg>
);

const TaskbarRow = () => (
  <Taskbar>
    <Weather>
      <svg width="30" height="28" viewBox="0 0 30 28">
        <defs><linearGradient id="sun" x1="0" y1="0" x2="0" y2="1"><stop offset="0" stopColor="#fdc90c" /><stop offset="1" stopColor="#ea5e0d" /></linearGradient></defs>
        <circle cx="15" cy="14" r="13" fill="url(#sun)" />
        <g strokeWidth="3" strokeLinecap="round"><path d="M6 7h3M16 7h12M7 12h21" stroke="#fbf2d8" /><path d="M2 17.500h11M20 17.500h2.500M2 22.500h20" stroke="#e5c791" /></g>
      </svg>
      <WeatherText><div>33°C</div><div>Haze</div></WeatherText>
    </Weather>
    <TaskCell><WinLogo /></TaskCell>
    <SearchBox>
      <svg width="20" height="20" viewBox="0 0 20 20" fill="none" stroke="#26292b" strokeWidth="2"><circle cx="8.500" cy="8.500" r="7" /><path d="M13.500 13.500l5.500 5.500" strokeWidth="2.400" /></svg>
      <span>Search</span>
      <Cricket />
    </SearchBox>
    <TaskCell><TaskView /></TaskCell>
    <TaskCell><Folder /><Running /></TaskCell>
    <TaskCell><Diamond /></TaskCell>
    <TaskCell><Store /></TaskCell>
    <TaskCell><ActiveTile><ChromeLogo /></ActiveTile><Running $active /></TaskCell>
    <TaskCell><Help /></TaskCell>
    <TaskCell><Control /></TaskCell>
    <TaskCell><Notepad /><Running /></TaskCell>
    <TaskCell><Code /><Running /></TaskCell>
    <Tray>
      <svg width="14" height="8" viewBox="0 0 14 8"><path d="M1 7l6-6 6 6" fill="none" stroke="#1a1a1a" strokeWidth="1.800" /></svg>
      <CloudOff width="22" height="18" viewBox="0 0 22 18">
        <path d="M5.500 15.500a4.500 4.500 0 0 1-.8-8.900 6 6 0 0 1 11.300-.8 5 5 0 0 1 .5 9.700z" fill="#d5d3d0" stroke="#1a1a1a" strokeWidth="1.500" />
        <path d="M6 7a5 5 0 0 1 9-1.500l-2 6z" fill="#8b8986" /><path d="M3 1l16 16" stroke="#1a1a1a" strokeWidth="1.500" />
      </CloudOff>
      <Lang>ENG<br />IN</Lang>
      <svg width="21" height="16" viewBox="0 0 21 16" fill="none" stroke="#1a1a1a" strokeWidth="1.400">
        <path d="M.8 6a13.700 13.700 0 0 1 19.400 0M3.700 9a9.600 9.600 0 0 1 13.600 0M6.600 11.900a5.500 5.500 0 0 1 7.800 0" /><circle cx="10.500" cy="13.700" r="1.500" fill="#1a1a1a" stroke="none" />
      </svg>
      <Speaker width="20" height="16" viewBox="0 0 20 16" fill="none" stroke="#1a1a1a" strokeWidth="1.200">
        <path d="M1 5.500h2.500L8.500 1.500v13L3.500 10.500H1zM12 5l7 7M19 5l-7 7" />
      </Speaker>
      <Battery width="21" height="18" viewBox="0 0 21 18">
        <rect x="1.700" y="5.200" width="16" height="11" rx="2.500" fill="none" stroke="#1a1a1a" strokeWidth="1.400" /><rect x="3.500" y="7" width="12.500" height="7.500" rx="1" fill="#1a1a1a" />
        <path d="M18 8.500h1.200c.5 0 .8.300.8.800v2.400c0 .5-.3.800-.8.800H18z" fill="#1a1a1a" /><path d="M4.500 0L0 6h2.500L1.500 11 7.500 4H4.500z" fill="#1a1a1a" stroke="#efe3c4" strokeWidth="1" />
      </Battery>
      <Clock>16:59<br />23-02-2025</Clock>
      <Bell width="19" height="20" viewBox="0 0 19 20">
        <path d="M8.500 2C5 2 2.600 4.500 2.600 8v4.500L.5 15.500h16l-2.100-3V8C14.400 4.500 12 2 8.500 2zM5.800 17a2.800 2.300 0 0 0 5.400 0z" fill="#1a1a1a" />
        <path d="M6.500 6.500h4l-4 5h4" fill="none" stroke="#eee" strokeWidth="1.300" /><path d="M13 1h4.500L13 6h4.500" fill="none" stroke="#eddfcb" strokeWidth="3" /><path d="M13 1.500h4L13 6h4" fill="none" stroke="#1a1a1a" strokeWidth="1.300" />
      </Bell>
    </Tray>
  </Taskbar>
);

export default function App() {
  return (
    <Screen>
      <Global />
      <Tabs />
      <ToolbarRow />
      <Bookmarks />
      <PageArea />
      <TaskbarRow />
    </Screen>
  );
}
